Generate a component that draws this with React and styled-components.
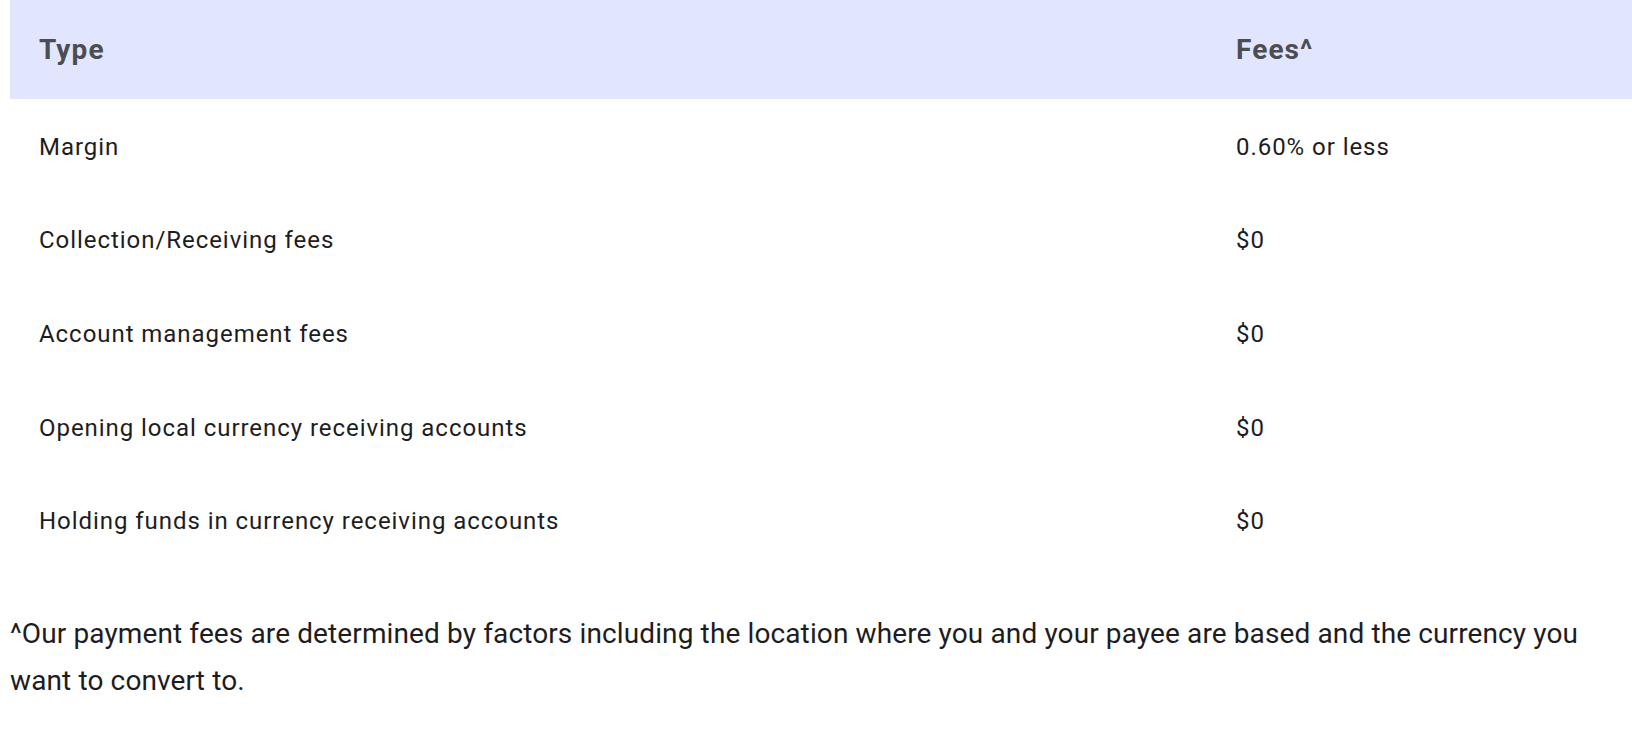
import React from "react";
import styled, { createGlobalStyle } from "styled-components";

const GlobalStyle = createGlobalStyle`
  html, body {
    margin: 0;
    padding: 0;
    background: #ffffff;
  }
  body {
    font-family: Roboto, "Liberation Sans", Arial, sans-serif;
    color: #1d1d1f;
  }
`;

const Page = styled.div`
  padding: 0 0 0 10px;
`;

const Table = styled.div`
  display: flex;
  flex-direction: column;
  width: 1622px;
`;

const Row = styled.div`
  display: grid;
  grid-template-columns: 1197px 1fr;
  align-items: center;
  height: ${(p) => (p.$head ? "99px" : "93.6px")};
  padding-top: ${(p) => (p.$head ? "0" : "2px")};
  box-sizing: border-box;
  background: ${(p) => (p.$head ? "#e1e6fe" : "transparent")};
`;

const Cell = styled.div`
  padding: 0 29px;
  font-size: ${(p) => (p.$head ? "28px" : "24px")};
  font-weight: ${(p) => (p.$head ? 700 : 400)};
  color: ${(p) => (p.$head ? "#4c4d52" : "#1d1d1f")};
  letter-spacing: ${(p) => (p.$head ? "1.1px" : "0.95px")};
  white-space: nowrap;
`;

const Note = styled.p`
  margin: 43px 0 0;
  font-size: 28px;
  letter-spacing: 0.12px;
  line-height: 47px;
  color: #1d1d1f;
  max-width: 1610px;
`;

const rows = [
  ["Margin", "0.60% or less"],
  ["Collection/Receiving fees", "$0"],
  ["Account management fees", "$0"],
  ["Opening local currency receiving accounts", "$0"],
  ["Holding funds in currency receiving accounts", "$0"],
];

export default function App() {
  return (
    <>
      <GlobalStyle />
      <Page>
        <Table>
          <Row $head>
            <Cell $head>Type</Cell>
            <Cell $head>Fees^</Cell>
          </Row>
          {rows.map(([type, fee]) => (
            <Row key={type}>
              <Cell>{type}</Cell>
              <Cell>{fee}</Cell>
            </Row>
          ))}
        </Table>
        <Note>
          ^Our payment fees are determined by factors including the location where you and your payee are
          based and the currency you want to convert to.
        </Note>
      </Page>
    </>
  );
}
